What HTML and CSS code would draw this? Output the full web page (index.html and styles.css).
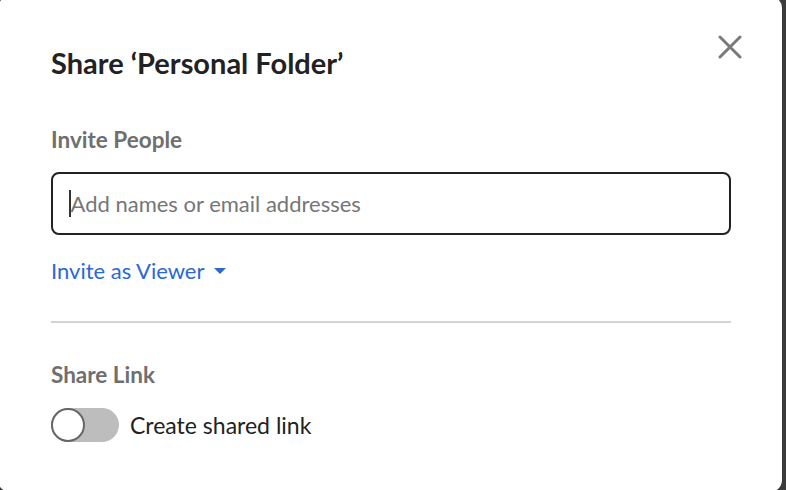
FILE: index.html
```html
<!DOCTYPE html>
<html>
<head>
<meta charset="utf-8">
<link rel="stylesheet" href="styles.css">
</head>
<body>
<div class="modal">
  <div class="header">
    <h1 class="title">Share ‘Personal Folder’</h1>
    <button class="close" aria-label="Close">
      <svg width="24" height="24" viewBox="0 0 24 24"><path d="M2 2 L22 22 M22 2 L2 22" stroke="#7a7a7a" stroke-width="3" stroke-linecap="round"/></svg>
    </button>
  </div>
  <section class="section invite">
    <h2 class="label">Invite People</h2>
    <div class="input">
      <span class="caret"></span>
      <span class="placeholder">Add names or email addresses</span>
    </div>
    <div class="role">Invite as Viewer <span class="tri"></span></div>
  </section>
  <hr class="divider">
  <section class="section link">
    <h2 class="label">Share Link</h2>
    <div class="toggle-row">
      <span class="toggle"><span class="knob"></span></span>
      <span class="toggle-text">Create shared link</span>
    </div>
  </section>
</div>
</body>
</html>
```

FILE: styles.css
```css
html, body {
  margin: 0;
  padding: 0;
  height: 100%;
  overflow: hidden;
  background: #3b3b3b;
}
body {
  font-family: Lato, "Liberation Sans", sans-serif;
}
.modal {
  box-sizing: border-box;
  width: 784px;
  height: 496px;
  margin: -4px 0 0 -2px;
  background: #fff;
  border-radius: 12px;
  padding: 0 51px 0 53px;
}
.header {
  display: flex;
  justify-content: space-between;
  align-items: flex-start;
}
.title {
  margin: 49px 0 0 0;
  font-size: 29px;
  font-weight: 700;
  color: #222;
  line-height: 35px;
}
.close {
  margin: 39px -11px 0 0;
  padding: 0;
  border: 0;
  background: none;
  width: 24px;
  height: 24px;
}
.close svg { display: block; }
.label {
  margin: 0;
  font-size: 22.5px;
  font-weight: 700;
  color: #6f6f6f;
  line-height: 28px;
}
.invite .label { margin-top: 46px; }
.input {
  box-sizing: border-box;
  margin-top: 18px;
  height: 63px;
  border: 2px solid #222;
  border-radius: 8px;
  display: flex;
  align-items: center;
  padding-left: 16px;
}
.caret {
  width: 1.5px;
  height: 27px;
  background: #333;
}
.placeholder {
  font-size: 22px;
  color: #767676;
}
.role {
  margin-top: 23px;
  font-size: 22px;
  color: #2a68d5;
  line-height: 26px;
  display: flex;
  align-items: center;
}
.tri {
  display: inline-block;
  margin-left: 10px;
  width: 0;
  height: 0;
  border-left: 6px solid transparent;
  border-right: 6px solid transparent;
  border-top: 6px solid #2a68d5;
}
.divider {
  margin: 37px 0 0 0;
  border: 0;
  height: 2px;
  background: #d3d3d3;
}
.link .label { margin-top: 38px; }
.toggle-row {
  margin-top: 19px;
  display: flex;
  align-items: center;
}
.toggle {
  width: 68px;
  height: 34px;
  border-radius: 17px;
  background: #bdbdbd;
  display: flex;
  align-items: center;
}
.knob {
  box-sizing: border-box;
  width: 34px;
  height: 34px;
  border-radius: 50%;
  background: #fff;
  border: 2px solid #666;
}
.toggle-text {
  margin-left: 11px;
  font-size: 23px;
  color: #222;
}
```
